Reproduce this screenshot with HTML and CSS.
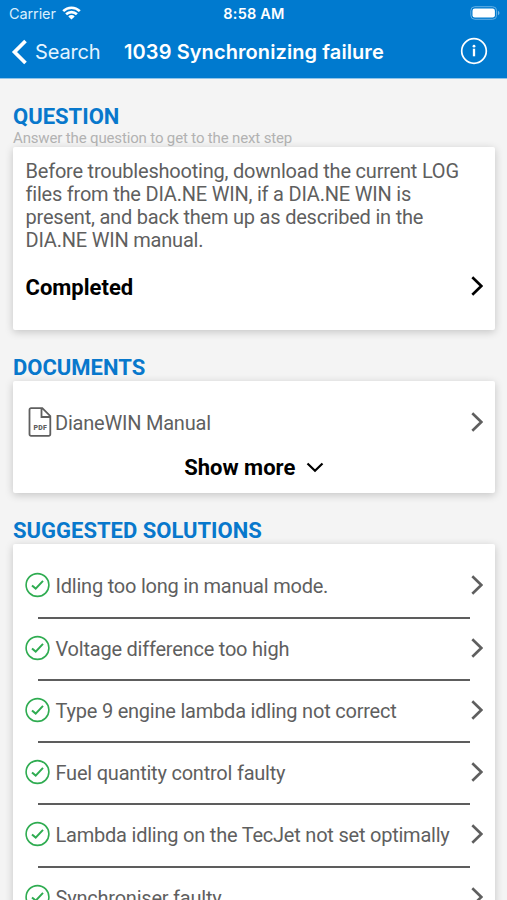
FILE: index.html
```html
<!DOCTYPE html>
<html lang="en">
<head>
<meta charset="utf-8">
<title>1039 Synchronizing failure</title>
<link rel="stylesheet" href="styles.css">
</head>
<body>
<svg width="0" height="0" class="defs">
  <symbol id="chevron" viewBox="0 0 12 20"><path d="M1.3 1.2 10.3 10 1.3 18.8" fill="none" stroke="currentColor" stroke-width="2.6"/></symbol>
  <symbol id="check" viewBox="0 0 26 26"><circle cx="12.5" cy="13" r="11.4" fill="none" stroke="currentColor" stroke-width="1.6"/><path d="M7 13.4 10.700 16.600 18 8.900" fill="none" stroke="currentColor" stroke-width="2"/></symbol>
</svg>
<header class="header">
  <div class="status">
    <div class="carrier"><span>Carrier</span>
      <svg width="19" height="14" viewBox="0 0 19 14"><g fill="none" stroke="#fff" stroke-width="2.6"><path d="M1.2 5.1a11.8 11.8 0 0 1 16.6 0"/><path d="M4.1 8.3a7.7 7.7 0 0 1 10.8 0"/></g><path d="M9.5 13.6 6.3 10.4a4.6 4.6 0 0 1 6.4 0z" fill="#fff"/></svg>
    </div>
    <div class="time">8:58 AM</div>
    <svg class="battery" width="30" height="14" viewBox="0 0 30 14"><rect x=".8" y=".7" width="25.800" height="12.600" rx="4" fill="none" stroke="#65b0e4" stroke-width="1"/><rect x="2.500" y="2.400" width="22.400" height="9.200" rx="2.300" fill="#fff"/><path d="M28 4.800c2 .9 2 3.500 0 4.400z" fill="#75b8e6"/></svg>
  </div>
  <nav class="nav">
    <a class="back"><svg width="16" height="26" viewBox="0 0 16 26"><path d="M14.500 2 3.500 13 14.500 24" fill="none" stroke="#fff" stroke-width="3.700"/></svg><span>Search</span></a>
    <h1 class="title">1039 Synchronizing failure</h1>
    <svg class="info" width="28" height="28" viewBox="0 0 28 28"><circle cx="14" cy="14" r="12.300" fill="none" stroke="#fff" stroke-width="1.700"/><path d="M14 11.700v7.600" stroke="#fff" stroke-width="2.300"/><circle cx="14" cy="9.200" r="1.400" fill="#fff"/></svg>
  </nav>
</header>
<main class="main">
  <h2 class="heading">QUESTION</h2>
  <p class="hint">Answer the question to get to the next step</p>
  <section class="card question">
    <p class="text">Before troubleshooting, download the current LOG<br>files from the DIA.NE WIN, if a DIA.NE WIN is<br>present, and back them up as described in the<br>DIA.NE WIN manual.</p>
    <div class="answer"><span>Completed</span><svg class="chev"><use href="#chevron"/></svg></div>
  </section>
  <h2 class="heading documents-heading">DOCUMENTS</h2>
  <section class="card documents">
    <div class="document">
      <svg class="pdf" width="24" height="30" viewBox="0 0 24 30"><path d="M3 1.200h11.300l8 8V27.300a1.500 1.500 0 0 1-1.500 1.500H3a1.500 1.500 0 0 1-1.500-1.500V2.700A1.500 1.500 0 0 1 3 1.200zM13.500 1.200V10h8.800" fill="none" stroke="currentColor" stroke-width="1.800"/><text x="12.300" y="22.600" class="pdf-label">PDF</text></svg>
      <span class="label">DianeWIN Manual</span><svg class="chev"><use href="#chevron"/></svg>
    </div>
    <div class="more"><span>Show more</span><svg width="18" height="11" viewBox="0 0 18 11"><path d="M1.500 1.500 9 8.800 16.500 1.500" fill="none" stroke="#000" stroke-width="2.200"/></svg></div>
  </section>
  <h2 class="heading solutions-heading">SUGGESTED SOLUTIONS</h2>
  <ul class="card solutions">
    <li class="solution"><svg class="check"><use href="#check"/></svg><span class="label">Idling too long in manual mode.</span><svg class="chev"><use href="#chevron"/></svg></li>
    <li class="solution"><svg class="check"><use href="#check"/></svg><span class="label">Voltage difference too high</span><svg class="chev"><use href="#chevron"/></svg></li>
    <li class="solution"><svg class="check"><use href="#check"/></svg><span class="label">Type 9 engine lambda idling not correct</span><svg class="chev"><use href="#chevron"/></svg></li>
    <li class="solution"><svg class="check"><use href="#check"/></svg><span class="label">Fuel quantity control faulty</span><svg class="chev"><use href="#chevron"/></svg></li>
    <li class="solution"><svg class="check"><use href="#check"/></svg><span class="label">Lambda idling on the TecJet not set optimally</span><svg class="chev"><use href="#chevron"/></svg></li>
    <li class="solution"><svg class="check"><use href="#check"/></svg><span class="label">Synchroniser faulty</span><svg class="chev"><use href="#chevron"/></svg></li>
  </ul>
</main>
</body>
</html>
```
FILE: styles.css
```css
* { box-sizing: border-box; margin: 0; padding: 0; }
body { height: 900px; overflow: hidden; background: #f4f4f4; font-family: Roboto, "Liberation Sans", sans-serif; color: #5f5f5f; }
.defs { display: block; }
svg { flex: none; }
.header { height: 79px; background: #007acf; color: #fff; font-family: Inter, sans-serif; border-bottom: 1px solid #8fc4e9; }
.status { height: 27px; padding: 0 6px 0 9px; display: grid; grid-template-columns: 1fr auto 1fr; align-items: center; }
.carrier { display: flex; align-items: center; gap: 6px; font-size: 14.5px; letter-spacing: -.1px; color: #d9effd; }
.carrier svg { margin-top: -1px; }
.time { font-size: 14.5px; font-weight: 600; letter-spacing: .2px; margin-left: -2px; }
.battery { justify-self: end; margin: -1px 1px 0 0; }
.nav { height: 50px; padding: 0 19px 0 11px; display: flex; align-items: center; }
.back { display: flex; align-items: center; gap: 8px; width: 113px; font-size: 20px; letter-spacing: -.15px; color: #e4f4ff; }
.title { font-size: 20px; font-weight: 600; letter-spacing: .09px; white-space: nowrap; }
.info { margin: -3px 0 0 auto; }
.main { padding: 25px 12.5px 0 13px; }
.heading { height: 25px; line-height: 25px; font-size: 22px; font-weight: 700; color: #0878cc; white-space: nowrap; }
.hint { height: 18px; line-height: 19px; font-size: 15px; letter-spacing: -.15px; color: #b2b2b2; }
.card { background: #fff; border-radius: 2px; box-shadow: 0 2px 8px rgba(0,0,0,.2); position: relative; }
.question { height: 183px; padding: 13px 12px 0 12.5px; }
.text { font-size: 20px; line-height: 23px; letter-spacing: -.21px; white-space: nowrap; }
.answer { height: 48px; margin-top: 11px; display: flex; align-items: center; justify-content: space-between; color: #000; font-size: 22px; font-weight: 700; }
.answer .chev { margin-top: -2px; }
.documents-heading { margin-top: 25px; margin-bottom: 1px; }
.chev { width: 12px; height: 20px; }
.documents { height: 112px; padding: 19px 12px 0 15px; }
.document { height: 45px; display: flex; align-items: center; gap: 3px; font-size: 20px; }
.document .chev, .pdf { margin-top: -1px; }
.label { flex: 1; letter-spacing: -.22px; white-space: nowrap; }
.pdf-label { font-size: 7px; font-weight: 900; letter-spacing: .3px; text-anchor: middle; fill: currentColor; }
.more { height: 44px; padding-right: 2px; display: flex; align-items: center; justify-content: center; gap: 11px; font-size: 22px; font-weight: 700; color: #000; }
.solutions-heading { margin-top: 25px; margin-bottom: 1px; }
.solutions { height: 400px; padding: 12.3px 12px 0; list-style: none; }
.solution { height: 62.25px; display: grid; grid-template: 60.25px 2px / 26px 1fr 12px; column-gap: 4.5px; align-items: center; font-size: 20px; }
.solution::after { content: ""; grid-column: 1 / -1; height: 2px; margin: 0 13px 0 12.5px; background: #5d5d5d; }
.check { width: 26px; height: 26px; color: #2fac51; margin-top: -2px; }
.solution .chev { margin-top: -2px; }
```
